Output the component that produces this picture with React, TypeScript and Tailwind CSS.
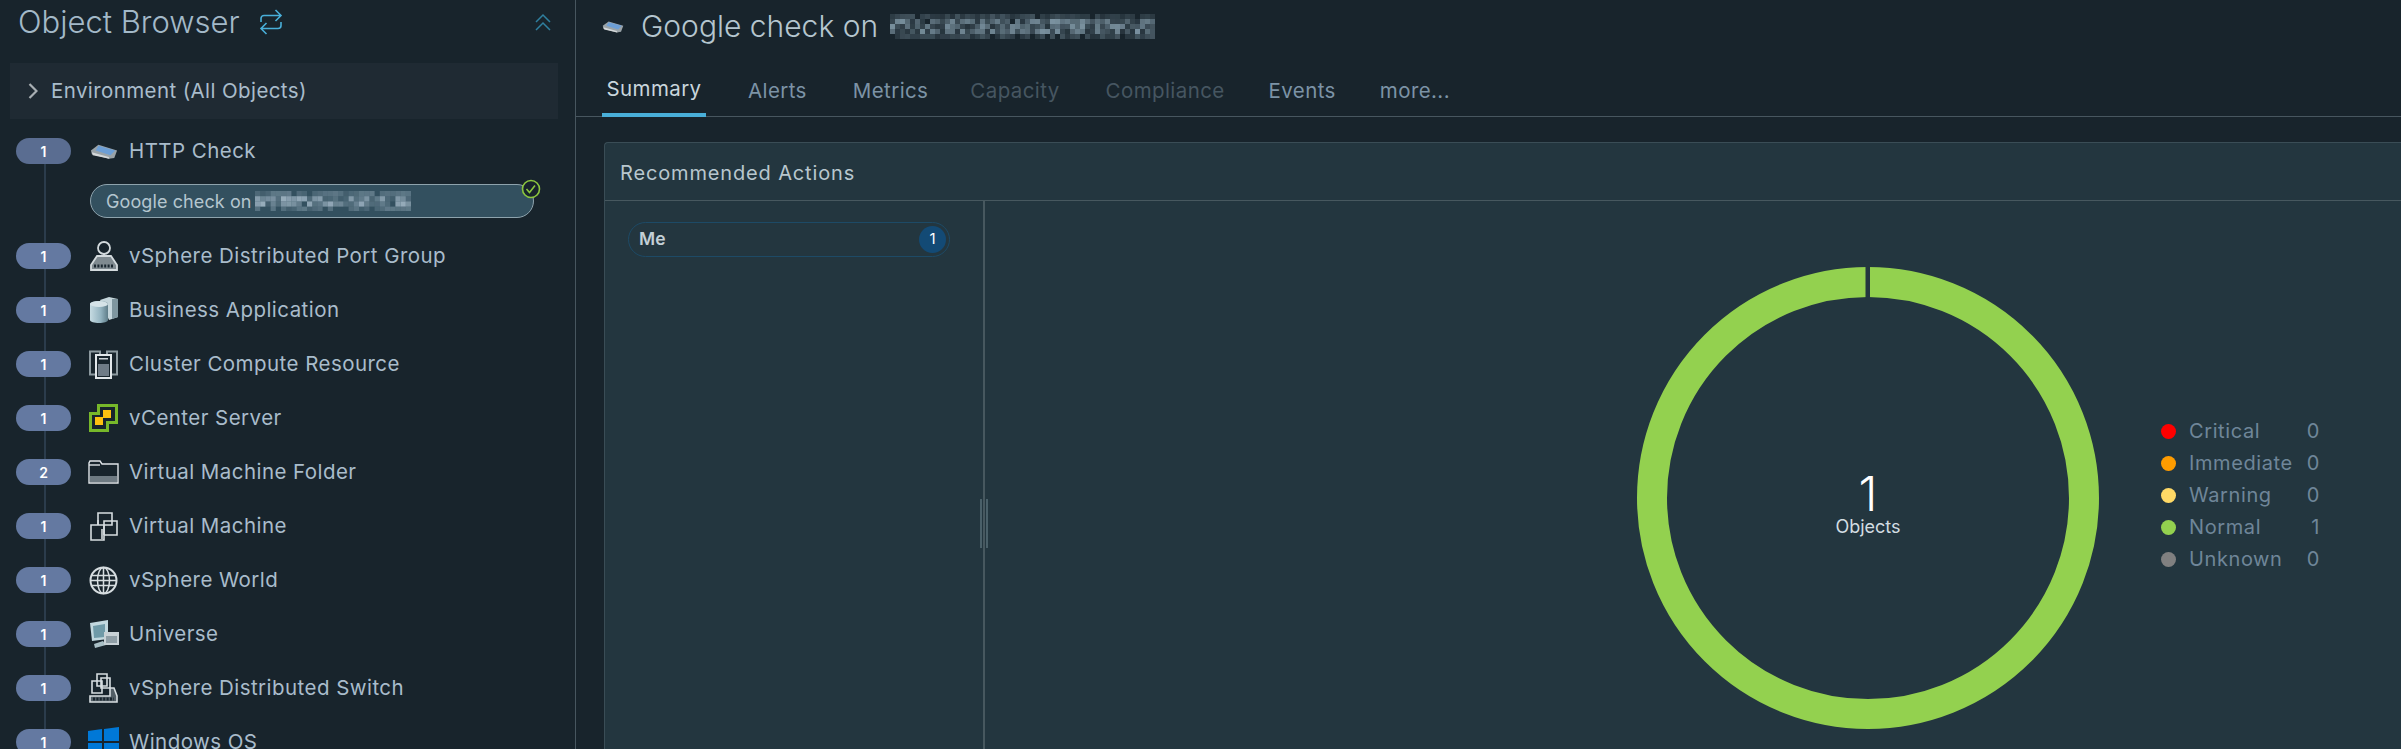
import type { ReactNode } from 'react';

function Mosaic({ cols, rows, cell, seed, base }: { cols: number; rows: number; cell: number; seed: number; base: number[] }) {
  const rects = [];
  for (let r = 0; r < rows; r++) {
    for (let c = 0; c < cols; c++) {
      const h = Math.abs(Math.sin((c + 1) * 12.9898 + (r + 1) * 78.233 + seed) * 43758.5453) % 1;
      const mid = r > 0 && r < rows - 1 ? 1 : 0.45;
      const a = (h * 0.75 + 0.1) * mid;
      if (a < 0.12) continue;
      rects.push(
        <rect
          key={`${r}-${c}`}
          x={c * cell}
          y={r * cell}
          width={cell}
          height={cell}
          fill={`rgb(${base[0]},${base[1]},${base[2]})`}
          opacity={a}
        />,
      );
    }
  }
  return (
    <svg width={cols * cell} height={rows * cell} className="block shrink-0">
      {rects}
    </svg>
  );
}

function SwitchIcon() {
  return (
    <svg width="24" height="26" viewBox="0 0 24 26" fill="none" stroke="#49afd9" strokeWidth="1.6" className="ml-[19px] shrink-0">
      <path d="M2 13V9.500a3 3 0 0 1 3-3h17M16.500 1l5.500 5.500L16.500 12" />
      <path d="M22 13v3.500a3 3 0 0 1-3 3H2M7.500 14 2 19.500 7.500 25" />
    </svg>
  );
}

function MonitorCheckIcon({ w }: { w: number }) {
  return (
    <svg width={w} height={w * 0.6} viewBox="0 0 30 18" className="shrink-0">
      <path d="M1 8 9 2l20 6-3 8-6 1L2 12z" fill="#9aa3a8" />
      <path d="M9 3l18 5-5 5L6 8z" fill="#6d9fd6" />
      <path d="M2 10l18 5 1 2L3 13z" fill="#d4d8da" />
    </svg>
  );
}

function PortGroupIcon() {
  return (
    <svg width="30" height="30" viewBox="0 0 30 30" fill="none" stroke="#d3dadd" strokeWidth="1.800">
      <circle cx="15" cy="7" r="6" />
      <path d="M15 13v2" />
      <path d="M8 15 2 24v5h26v-5l-6-9H8z" fill="#7f8a90" />
      <path d="M5 25h20" stroke="#1a2730" strokeWidth="3" strokeDasharray="2 1.400" />
    </svg>
  );
}

function BusinessAppIcon() {
  return (
    <svg width="30" height="28" viewBox="0 0 30 28">
      <defs>
        <linearGradient id="cyl" x1="0" x2="1" y1="0" y2="0">
          <stop offset="0" stopColor="#c6dbe2" />
          <stop offset="0.6" stopColor="#93b3c0" />
          <stop offset="1" stopColor="#5f7d89" />
        </linearGradient>
      </defs>
      <path d="M11 4l9-3 9 2v18l-9 3z" fill="#c5d6dc" />
      <path d="M23 3l6 0v18l-6 2z" fill="#7f969f" />
      <path d="M1 8c0-4 18-4 18 0v16c0 4-18 4-18 0z" fill="url(#cyl)" />
      <ellipse cx="10" cy="8" rx="9" ry="3" fill="#d5e3e8" />
    </svg>
  );
}

function ClusterIcon() {
  return (
    <svg width="29" height="29" viewBox="0 0 29 29" fill="none">
      <path d="M1 1.500h10v23H1zM18 1.500h10v23H18z" stroke="#8c999f" strokeWidth="2" />
      <path d="M7 5h15v23H7z" fill="#18242c" stroke="#e2e7ea" strokeWidth="2" />
      <path d="M10 8h9v1.500h-9z" fill="#cdd4d8" />
      <path d="M9 14h11v12H9z" fill="#6f7b86" />
    </svg>
  );
}

function VCenterIcon() {
  return (
    <svg width="29" height="28" viewBox="0 0 29 28">
      <path d="M9.500 1.500h18v17h-9v8h-17v-17h8z" fill="#18242c" stroke="#77b82a" strokeWidth="3" />
      <path d="M14 6h8v8h-8z" fill="#fdc010" />
      <path d="M6 13h8v8H6z" fill="#fdc010" />
    </svg>
  );
}

function FolderIcon() {
  return (
    <svg width="31" height="24" viewBox="0 0 31 24" fill="none">
      <path d="M1 5V3l1-2h10l2 3h16v19H1z" stroke="#dfe4e7" strokeWidth="1.400" />
      <path d="M1 5h11" stroke="#dfe4e7" strokeWidth="1.400" />
      <path d="M2 16h27v6H2z" fill="#6e7a82" />
    </svg>
  );
}

function VmIcon() {
  return (
    <svg width="28" height="29" viewBox="0 0 28 29" fill="none" stroke="#d6dde0" strokeWidth="1.600">
      <path d="M1 13h13v15H1zM8 1h14v12H8zM14 9h13v14H14z" />
      <path d="M12 17v10" />
      <path d="M8 13V8M14 13v10" />
    </svg>
  );
}

function GlobeIcon() {
  return (
    <svg width="29" height="29" viewBox="0 0 29 29" fill="none" stroke="#d6dde0" strokeWidth="1.500">
      <circle cx="14.500" cy="14.500" r="13" strokeWidth="2" />
      <ellipse cx="14.500" cy="14.500" rx="6" ry="13" />
      <path d="M14.500 1.500v26M2.500 9.500h24M1.500 14.500h26M2.500 19.500h24" />
    </svg>
  );
}

function UniverseIcon() {
  return (
    <svg width="30" height="30" viewBox="0 0 30 30">
      <path d="M1 4l18-3v19L3 22z" fill="#c2d8df" />
      <path d="M4 7l12-2v13L5 19z" fill="#6f9aa8" />
      <path d="M5 25l9-3 3 4-11 3z" fill="#a9bfc6" />
      <path d="M15 13h15v13H15z" fill="#c8d1d6" />
      <path d="M17 17h11v7H17z" fill="#8f9ea6" />
    </svg>
  );
}

function SwitchDeviceIcon() {
  return (
    <svg width="29" height="30" viewBox="0 0 29 30" fill="none" stroke="#d6dde0" strokeWidth="1.600">
      <path d="M3 8h10v12H3zM8 1h10v12H8zM12 5h9v10h-9z" />
      <path d="M21 15l4 0 3 8v6H1v-6h20z" fill="#525e66" />
      <path d="M4 26h21" stroke="#18242c" strokeWidth="3" strokeDasharray="2 1.400" />
    </svg>
  );
}

function WindowsIcon() {
  return (
    <svg width="31" height="30" viewBox="0 0 31 30" fill="#0078d7">
      <path d="M0 4l14-2v12H0zM16 2l15-2v14H16zM0 16h14v12L0 26zM16 16h15v14l-15-2z" />
    </svg>
  );
}

const rows: { count: number; label: string; icon: ReactNode }[] = [
  { count: 1, label: 'vSphere Distributed Port Group', icon: <PortGroupIcon /> },
  { count: 1, label: 'Business Application', icon: <BusinessAppIcon /> },
  { count: 1, label: 'Cluster Compute Resource', icon: <ClusterIcon /> },
  { count: 1, label: 'vCenter Server', icon: <VCenterIcon /> },
  { count: 2, label: 'Virtual Machine Folder', icon: <FolderIcon /> },
  { count: 1, label: 'Virtual Machine', icon: <VmIcon /> },
  { count: 1, label: 'vSphere World', icon: <GlobeIcon /> },
  { count: 1, label: 'Universe', icon: <UniverseIcon /> },
  { count: 1, label: 'vSphere Distributed Switch', icon: <SwitchDeviceIcon /> },
  { count: 1, label: 'Windows OS', icon: <WindowsIcon /> },
];

const tabs = [
  { label: 'Summary', className: 'text-[#c9d6dd] w-[104px] border-b-[4px] border-[#49afd9]' },
  { label: 'Alerts', className: 'text-[#7c93a6] ml-[42px]' },
  { label: 'Metrics', className: 'text-[#7c93a6] ml-[46px]' },
  { label: 'Capacity', className: 'text-[#465661] ml-[42px]' },
  { label: 'Compliance', className: 'text-[#465661] ml-[46px]' },
  { label: 'Events', className: 'text-[#7c93a6] ml-[44px]' },
  { label: 'more...', className: 'text-[#7c93a6] ml-[44px]' },
];

const legend = [
  { label: 'Critical', value: 0, dot: 'bg-[#ff0000]' },
  { label: 'Immediate', value: 0, dot: 'bg-[#ff9c00]' },
  { label: 'Warning', value: 0, dot: 'bg-[#ffd966]' },
  { label: 'Normal', value: 1, dot: 'bg-[#93d14f]' },
  { label: 'Unknown', value: 0, dot: 'bg-[#808080]' },
];

function TreeRow({ count, label, icon }: { count: number; label: string; icon: ReactNode }) {
  return (
    <div className="flex items-center h-[28px] shrink-0">
      <div className="relative w-[55px] h-[26px] rounded-full bg-[#6479a1] flex items-center justify-center text-[14px] font-semibold text-white">
        {count}
      </div>
      <div className="w-[31px] ml-[17px] flex items-center justify-center">{icon}</div>
      <span className="ml-[10px] text-[20.500px] tracking-[0.45px] text-[#a9bccb] whitespace-nowrap">{label}</span>
    </div>
  );
}

function Sidebar() {
  return (
    <aside className="w-[576px] shrink-0 border-r border-[#47565f] pl-[10px] pr-[17px] flex flex-col overflow-hidden">
      <div className="flex items-center h-[44px] shrink-0 pl-[8px] pr-[7px]">
        <span className="text-[31px] font-light text-[#a3b9c8] whitespace-nowrap">Object Browser</span>
        <SwitchIcon />
        <svg width="16" height="18" viewBox="0 0 16 18" fill="none" stroke="#2f7f9f" strokeWidth="1.500" className="ml-auto">
          <path d="M1 9l7-7 7 7M1 17l7-7 7 7" />
        </svg>
      </div>
      <div className="mt-[19px] h-[56px] shrink-0 bg-[#1f2a33] flex items-center pl-[18px] gap-[13px]">
        <svg width="10" height="16" viewBox="0 0 10 16" fill="none" stroke="#a8afb3" strokeWidth="2.200">
          <path d="M1.500 1l7 7-7 7" />
        </svg>
        <span className="text-[20.500px] tracking-[0.4px] text-[#a9bccb] whitespace-nowrap">Environment (All Objects)</span>
      </div>
      <div className="relative pl-[6px] flex flex-col shrink-0">
        <div className="absolute left-[34px] top-[31px] bottom-0 w-[2px] bg-[#2b3c4c]" />
        <div className="flex items-center h-[28px] mt-[18px] shrink-0">
          <div className="relative w-[55px] h-[26px] rounded-full bg-[#5a6d91] flex items-center justify-center text-[14px] font-semibold text-white">
            1
          </div>
          <div className="w-[31px] ml-[17px] flex items-center justify-center">
            <MonitorCheckIcon w={28} />
          </div>
          <span className="ml-[10px] text-[20.500px] tracking-[0.45px] text-[#a9bccb] whitespace-nowrap">HTTP Check</span>
        </div>
        <div className="relative ml-[74px] mt-[19px] w-[444px] h-[34px] shrink-0 rounded-full bg-[#33505f] border border-[#8ea3ad] flex items-center pl-[15px]">
          <span className="text-[18px] tracking-[0.1px] text-[#b5c6cf] whitespace-nowrap">Google check on</span>
          <div className="ml-[3px]">
            <Mosaic cols={30} rows={4} cell={5.200} seed={4} base={[170, 190, 205]} />
          </div>
          <svg width="20" height="20" viewBox="0 0 20 20" fill="none" className="absolute -top-[6px] -right-[8px]">
            <circle cx="10" cy="10" r="8.500" fill="#17232c" stroke="#8cc63f" strokeWidth="1.600" />
            <path d="M5.500 10l3 3.500 5.500-7" stroke="#8cc63f" strokeWidth="1.600" />
          </svg>
        </div>
        <div className="mt-[24px] flex flex-col gap-[26px]">
          {rows.map((row) => (
            <TreeRow key={row.label} {...row} />
          ))}
        </div>
      </div>
    </aside>
  );
}

function Donut() {
  return (
    <div className="relative w-[462px] h-[462px] shrink-0">
      <svg width="462" height="462" viewBox="0 0 462 462" fill="none">
        <circle cx="231" cy="231" r="216" stroke="#93d14f" strokeWidth="30" />
        <path d="M228.500 0h4.500v32h-4.500z" fill="#23363f" />
      </svg>
      <div className="absolute inset-0 pt-[10px] flex flex-col items-center justify-center text-white">
        <span className="text-[48px] leading-[48px] font-light">1</span>
        <span className="text-[18px] leading-[18px] text-[#d3dde2]">Objects</span>
      </div>
    </div>
  );
}

export default function App() {
  return (
    <div className="h-[749px] w-[2401px] overflow-hidden bg-[#18242c] flex font-['Inter','Liberation_Sans',sans-serif]">
      <Sidebar />
      <main className="flex-1 min-w-0 flex flex-col">
        <div className="flex items-center h-[53px] pl-[26px]">
          <MonitorCheckIcon w={22} />
          <span className="ml-[17px] text-[30px] font-light text-[#b5c6cf] whitespace-nowrap">Google check on</span>
          <div className="ml-[12px]">
            <Mosaic cols={53} rows={5} cell={5} seed={9} base={[140, 165, 180]} />
          </div>
        </div>
        <div className="flex items-end h-[64px] pl-[26px] border-b border-[#47565f] text-[20.500px] tracking-[0.4px]">
          {tabs.map((tab) => (
            <div key={tab.label} className={`h-[52px] flex items-center justify-center -mb-px ${tab.className}`}>
              {tab.label}
            </div>
          ))}
        </div>
        <section className="ml-[28px] mt-[25px] w-[1830px] flex-1 bg-[#23363f] border-l border-t border-[#3a4d56] rounded-tl-[4px] flex flex-col">
          <div className="h-[58px] flex items-center pl-[15px] pt-[2px] border-b border-[#47585f] text-[20px] tracking-[0.85px] text-[#b8c7ce]">
            Recommended Actions
          </div>
          <div className="flex-1 flex min-h-0">
            <div className="relative w-[380px] shrink-0 border-r-2 border-[#47585f] pl-[23px] pt-[21px]">
              <div className="w-[322px] h-[35px] rounded-full border border-[#1d4a66] flex items-center justify-between pl-[10px] pr-[3px]">
                <span className="text-[17.500px] font-semibold text-[#c3d0d6]">Me</span>
                <span className="w-[27px] h-[27px] rounded-full bg-[#134a75] text-[15px] text-white flex items-center justify-center">1</span>
              </div>
              <div className="absolute -right-[5px] top-[298px] w-[8px] h-[49px] border-x-2 border-[#4a6069]" />
            </div>
            <div className="flex-1 flex items-start pl-[652px] pt-[66px]">
              <Donut />
              <ul className="ml-[62px] mt-[148px] w-[159px] flex flex-col">
                {legend.map((item) => (
                  <li key={item.label} className="flex items-center h-[32px] text-[20px] tracking-[0.6px] text-[#6f8699]">
                    <span className={`w-[15px] h-[15px] rounded-full ${item.dot}`} />
                    <span className="ml-[13px] flex-1 whitespace-nowrap">{item.label}</span>
                    <span>{item.value}</span>
                  </li>
                ))}
              </ul>
            </div>
          </div>
        </section>
      </main>
    </div>
  );
}
